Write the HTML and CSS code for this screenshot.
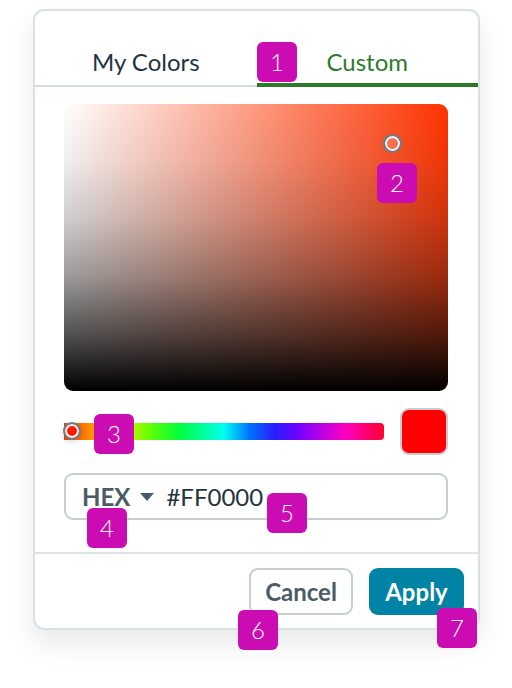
FILE: index.html
```html
<html lang="en">
<head>
    <meta charset="UTF-8">
    <meta name="viewport" content="width=device-width, initial-scale=1.0">
    <title>Color Picker</title>
    <link rel="stylesheet" href="styles.css">
</head>
<body>
    <div id="picker">
        <div class="tabs">
            <div class="tab">My Colors</div>
            <div class="tab active">Custom</div>
            <span class="badge b1">1</span>
        </div>

        <div class="body">
            <div class="field">
                <span class="marker"></span>
                <span class="badge b2">2</span>
            </div>

            <div class="hue-row">
                <div class="hue">
                    <span class="knob"></span>
                    <span class="badge b3">3</span>
                </div>
                <div class="swatch"></div>
            </div>

            <div class="hex-input">
                <span class="mode">HEX</span>
                <span class="caret"></span>
                <span class="value">#FF0000</span>
                <span class="badge b4">4</span>
                <span class="badge b5">5</span>
            </div>
        </div>

        <div class="footer">
            <button class="btn cancel">Cancel<span class="badge b6">6</span></button>
            <button class="btn apply">Apply<span class="badge b7">7</span></button>
        </div>
    </div>
</body>
</html>
```

FILE: styles.css
```css
* {
    box-sizing: border-box;
    margin: 0;
    padding: 0;
}
body {
    background-color: white;
    font-family: Lato, "Liberation Sans", sans-serif;
}
#picker {
    position: relative;
    width: 447px;
    margin: 9px 0 0 33px;
    border: 2px solid #d9e1e6;
    border-radius: 11px;
    background: white;
    box-shadow: 0 14px 28px rgba(0, 0, 0, 0.09);
}

/* tabs */
.tabs {
    position: relative;
    display: flex;
    height: 76px;
}
.tab {
    flex: 1;
    display: flex;
    align-items: flex-end;
    justify-content: center;
    padding-bottom: 9px;
    font-size: 24px;
    color: #23343e;
    border-bottom: 2px solid #d2dde3;
}
.tab.active {
    color: #2e7a2b;
    border-bottom: 4px solid #2e7a2b;
    padding-bottom: 7px;
}

/* body */
.body {
    padding: 17px 30px 32px 29px;
    border-bottom: 2px solid #dde3e7;
}
.field {
    position: relative;
    height: 287px;
    border-radius: 9px;
    background:
        linear-gradient(to bottom,
            rgba(0, 0, 0, 0) 0%,
            rgba(0, 0, 0, 0.04) 20%,
            rgba(0, 0, 0, 0.15) 40%,
            rgba(0, 0, 0, 0.34) 60%,
            rgba(0, 0, 0, 0.64) 80%,
            black 100%),
        linear-gradient(to bottom, rgba(128, 128, 128, 0), rgba(128, 128, 128, 0.25)),
        linear-gradient(to right, white, rgba(255, 255, 255, 0)),
        #ff3300;
}
.marker {
    position: absolute;
    left: 319px;
    top: 30px;
    width: 19px;
    height: 19px;
    border: 2px solid #6d7e88;
    border-radius: 50%;
    background: #f8704f;
    box-shadow: inset 0 0 0 2px white;
}

.hue-row {
    display: flex;
    align-items: center;
    gap: 16px;
    margin-top: 17px;
}
.hue {
    position: relative;
    flex: 1;
    height: 17px;
    border-radius: 0 4px 4px 0;
    background: linear-gradient(to right,
        #ff3b00 0%, #ff8a00 8%, #ffee00 17%, #6aff00 26%, #00ff3a 36%,
        #00fff0 50%, #0070ff 58%, #2a1cff 66%, #7a00ff 74%,
        #ff00c0 88%, #ff0030 100%);
}
.knob {
    position: absolute;
    left: -1px;
    top: -1px;
    width: 18px;
    height: 18px;
    border: 2px solid #6d7e88;
    border-radius: 50%;
    background: #ff1a00;
    box-shadow: inset 0 0 0 2px white, 0 2px 6px rgba(0, 0, 0, 0.15);
}
.swatch {
    width: 48px;
    height: 47px;
    border: 2px solid #c4ced3;
    border-radius: 9px;
    background: #ff0000;
}

.hex-input {
    position: relative;
    display: flex;
    align-items: center;
    height: 47px;
    margin-top: 18px;
    padding-left: 16px;
    border: 2px solid #c4ced3;
    border-radius: 9px;
    font-size: 24px;
}
.mode {
    font-weight: bold;
    color: #4b5c66;
}
.caret {
    width: 0;
    height: 0;
    margin: 1px 12px 0 10px;
    border-left: 7px solid transparent;
    border-right: 7px solid transparent;
    border-top: 8px solid #4b5c66;
}
.value {
    color: #23343e;
}

/* footer */
.footer {
    display: flex;
    justify-content: flex-end;
    gap: 16px;
    padding: 14px 14px 13px 0;
}
.btn {
    position: relative;
    height: 47px;
    padding: 0 10px;
    border-radius: 9px;
    font-family: Lato, "Liberation Sans", sans-serif;
    font-size: 24px;
    font-weight: bold;
}
.cancel {
    width: 104px;
    background: white;
    color: #4b5c66;
    border: 2px solid #c4ced3;
}
.apply {
    width: 95px;
    background: #0083a5;
    color: white;
    border: none;
}

/* annotation badges */
.badge {
    position: absolute;
    width: 40px;
    height: 40px;
    border-radius: 6px;
    background: #cb0cb2;
    color: white;
    font-family: Lato, "Liberation Sans", sans-serif;
    font-size: 24px;
    font-weight: 300;
    line-height: 40px;
    text-align: center;
}
.b1 { left: 222px; top: 31px; }
.b2 { left: 313px; top: 59px; }
.b3 { left: 30px; top: -9px; }
.b4 { left: 21px; top: 33px; }
.b5 { left: 201px; top: 18px; }
.b6 { left: -13px; top: 40px; }
.b7 { left: 68px; top: 40px; }
```
